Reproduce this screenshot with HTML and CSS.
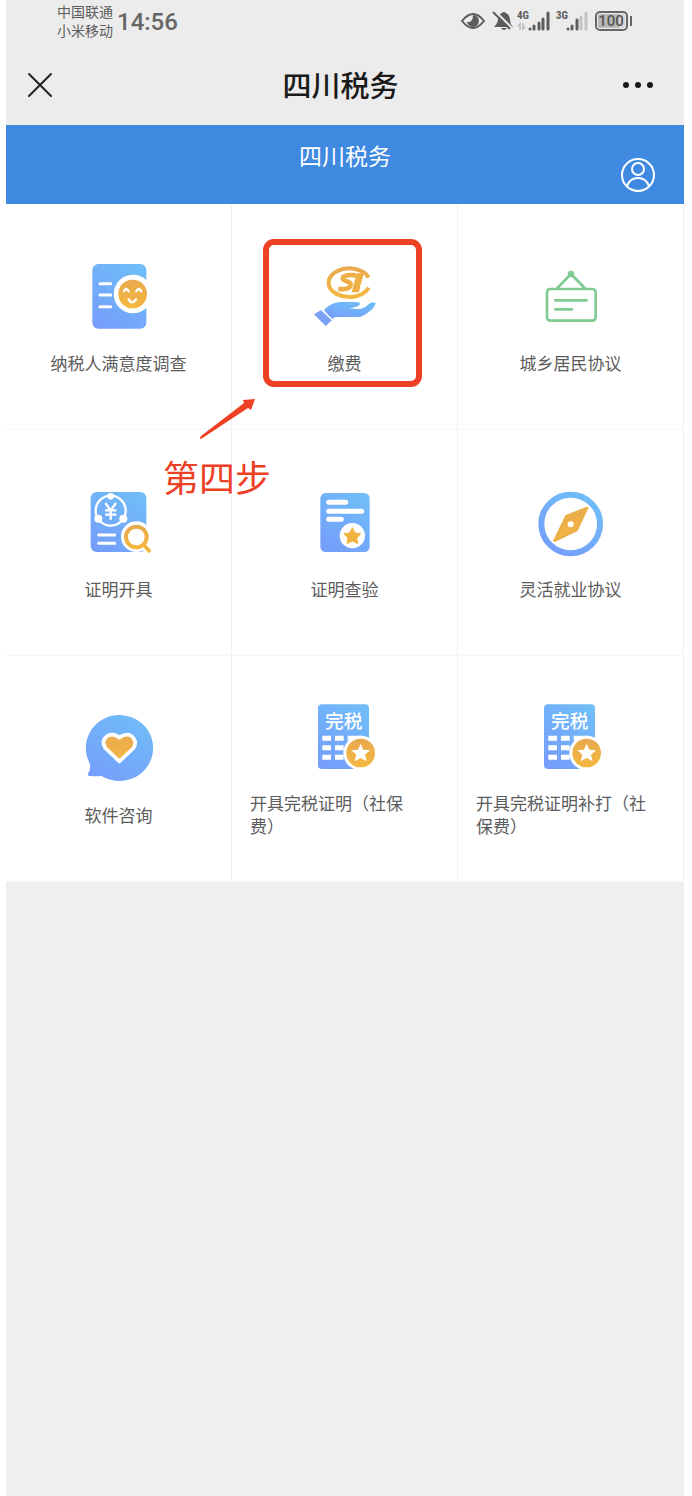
FILE: index.html
```
<!DOCTYPE html>
<html lang="zh-CN">

<head>
    <meta charset="UTF-8">
    <meta name="viewport" content="width=device-width, initial-scale=1">
    <title>四川税务</title>
    <link rel="stylesheet" href="styles.css">
</head>

<body>
    <!-- shared gradients -->
    <svg class="defs" width="0" height="0" aria-hidden="true">
        <defs>
            <linearGradient id="blue" x1="0.8" y1="0" x2="0.2" y2="1">
                <stop offset="0" stop-color="#70bdf8" />
                <stop offset="1" stop-color="#759efa" />
            </linearGradient>
            <linearGradient id="gold" x1="0.5" y1="0" x2="0.5" y2="1">
                <stop offset="0" stop-color="#e9a94e" />
                <stop offset="1" stop-color="#f4b840" />
            </linearGradient>
        </defs>
    </svg>

    <div class="phone">
        <div class="status">
            <div class="carrier">中国联通<br>小米移动</div>
            <time class="clock">14:56</time>
            <svg class="status-icons" viewBox="0 0 176 26" aria-hidden="true">
                <path d="M2 13Q13 -1 24 13Q13 27 2 13Z" fill="none" stroke="#5c5c5c" stroke-width="2" />
                <path d="M13 7a6 6 0 1 1-6 7q6 1 6-7Z" fill="#5c5c5c" />
                <path d="M34 19q4-4 4-8 1-5 4-6 2-2 4 0 4 2 4 7 0 4 3 7ZM41 20h6q-3 4-6 0Z" fill="#5c5c5c" />
                <path d="M35 3l17 17" stroke="#ececec" stroke-width="2" />
                <path d="M33 4l17 17" stroke="#5c5c5c" stroke-width="2" />
                <text class="net" x="57" y="11">4G</text>
                <path d="M60 22v-6l-2 2M63 15v6l2-2" fill="none" stroke="#b8b8b8" stroke-width="1.5" />
                <g stroke="#5c5c5c" stroke-width="3" stroke-linecap="round">
                    <path d="M70 21v0M74 21v-3M79 21v-6M83 21v-10M88 21V5" />
                </g>
                <text class="net" x="96" y="11">3G</text>
                <g stroke="#5c5c5c" stroke-width="3" stroke-linecap="round">
                    <path d="M108 21v0M112 21v-3M117 21v-9" />
                    <path d="M121 21v-12M126 21V5" stroke="#c4c4c4" />
                </g>
                <rect x="136" y="4" width="31" height="18" rx="4" fill="none" stroke="#666" stroke-width="2" />
                <rect x="138" y="6" width="27" height="14" rx="2" fill="#d4d4d4" />
                <path d="M140 6h19v14h-19q-2 0-2-2V8q0-2 2-2Z" fill="#b8b8b8" />
                <text class="battery" x="151" y="18">100</text>
                <path d="M171 8v10" stroke="#666" stroke-width="2" />
            </svg>
        </div>

        <header class="nav">
            <button class="icon-btn" type="button" aria-label="关闭">
                <svg width="26" height="26" viewBox="0 0 26 26">
                    <path d="M2 2l22 22M24 2L2 24" stroke="#222" stroke-width="2" stroke-linecap="round" />
                </svg>
            </button>
            <div class="nav-title">四川税务</div>
            <button class="icon-btn more" type="button" aria-label="更多">
                <svg width="32" height="8" viewBox="0 0 32 8" fill="#181818">
                    <circle cx="4" cy="4" r="3" />
                    <circle cx="16" cy="4" r="3" />
                    <circle cx="28" cy="4" r="3" />
                </svg>
            </button>
        </header>

        <div class="banner">
            <h1>四川税务</h1>
            <a class="user" href="#" aria-label="个人中心">
                <svg width="36" height="36" viewBox="0 0 36 36" fill="none" stroke="#fff" stroke-width="2">
                    <circle cx="18" cy="18" r="16" />
                    <circle cx="18" cy="12" r="6" />
                    <path d="M7 29q3-8 11-8t11 8" />
                </svg>
            </a>
        </div>

        <main class="grid">
            <a class="cell" href="#">
                <svg class="icon" viewBox="-3 30 300 240">
                    <rect x="67" y="42" width="162" height="194" rx="18" fill="url(#blue)" />
                    <path d="M90 101h32M90 135h32M90 170h32" stroke="#fff" stroke-width="9" stroke-linecap="round" />
                    <path d="M229 90A58 58 0 1 0 229 174L234 168V96Z" fill="#fff" />
                    <circle cx="188" cy="132" r="43" fill="url(#gold)" />
                    <path d="M162 124q6-14 14 0M199 124q7-14 15 0M176 148q10 18 22 0" fill="none" stroke="#fff"
                        stroke-width="7" stroke-linecap="round" />
                </svg>
                <span class="label">纳税人满意度调查</span>
            </a>

            <a class="cell" href="#">
                <svg class="icon" viewBox="135 90 300 240">
                    <path d="M356 143A62 43 0 1 0 356 173" fill="none" stroke="url(#gold)" stroke-width="12" />
                    <path d="M318 136q-37-4-40 9c0 10 27 8 24 20q-3 15-37 12" fill="none" stroke="#eeb044"
                        stroke-width="14" />
                    <path d="M320 130h22l-15 57h-22Z" fill="#eeb044" />
                    <path d="M343 135q-11 27-14 54" fill="none" stroke="#fff" stroke-width="3" />
                    <path d="M222 240q24-26 55-24h40q17 0 12 8-5 7-33 11l24 2q24 1 35-14 15-11 22-3-4 15-22 27-16 14-32 14h-67l-13 8Z"
                        fill="url(#blue)" />
                    <path d="M192 253l21-13 33 31-19 17Z" fill="#7ba2f6" />
                    <path d="M214 238l34 33" stroke="#fff" stroke-width="4" />
                </svg>
                <span class="label">缴费</span>
                <span class="highlight"></span>
                <span class="callout">
                    <svg class="arrow" width="56" height="42" viewBox="0 0 56 42">
                        <path d="M55 1l-4 11-3-2L1 41q-2 0 0-3L44 5l-1-3Z" fill="#ed4025" />
                    </svg>
                    第四步
                </span>
            </a>

            <a class="cell" href="#">
                <svg class="icon" viewBox="3 30 300 240">
                    <g fill="none" stroke="#7fcb91" stroke-width="8" stroke-linecap="round">
                        <rect x="81" y="117" width="146" height="95" rx="10" />
                        <path d="M112 114l41-42 41 42M106 151h94M106 178h50" />
                    </g>
                    <circle cx="153" cy="72" r="10" fill="#7fcb91" />
                </svg>
                <span class="label">城乡居民协议</span>
            </a>

            <a class="cell" href="#">
                <svg class="icon" viewBox="-3 18 300 240">
                    <rect x="62" y="36" width="167" height="180" rx="18" fill="url(#blue)" />
                    <circle cx="122" cy="92" r="45" fill="none" stroke="#fff" stroke-width="7" />
                    <g fill="#fff">
                        <circle cx="122" cy="49" r="10" />
                        <circle cx="85" cy="116" r="12" />
                        <circle cx="160" cy="116" r="12" />
                        <circle cx="199" cy="170" r="46" />
                    </g>
                    <path d="M106 69l16 22 16-22M122 91v28M105 91h34M105 104h34" fill="none" stroke="#fff"
                        stroke-width="7" />
                    <path d="M86 165h48M86 190h48" stroke="#fff" stroke-width="9" stroke-linecap="round" />
                    <path d="M220 195l22 22" stroke="#fff" stroke-width="24" />
                    <circle cx="199" cy="171" r="31" fill="none" stroke="url(#gold)" stroke-width="12" />
                    <path d="M221 194l19 22" stroke="#f4b33d" stroke-width="11" />
                </svg>
                <span class="label">证明开具</span>
            </a>

            <a class="cell" href="#">
                <svg class="icon" viewBox="0 18 300 240">
                    <rect x="76" y="39" width="148" height="177" rx="16" fill="url(#blue)" />
                    <path d="M101 67h51M101 94h99M101 118h38" stroke="#fff" stroke-width="15" stroke-linecap="round" />
                    <circle cx="172" cy="167" r="38" fill="#fff" />
                    <path d="M172 143l8 16 17 2-12 13 3 17-16-8-16 8 3-17-12-13 17-2Z" fill="#f0b33f" stroke="#f0b33f"
                        stroke-width="3" stroke-linejoin="round" />
                </svg>
                <span class="label">证明查验</span>
            </a>

            <a class="cell" href="#">
                <svg class="icon" viewBox="3 18 300 240">
                    <circle cx="152" cy="132" r="88" fill="none" stroke="url(#blue)" stroke-width="18" />
                    <path d="M201 84l-62 25-35 73 66-32Z" fill="url(#gold)" stroke="#ebaf47" stroke-width="8"
                        stroke-linejoin="round" />
                    <circle cx="152" cy="133" r="9" fill="#fff" />
                </svg>
                <span class="label">灵活就业协议</span>
            </a>

            <a class="cell" href="#">
                <svg class="icon" viewBox="-3 36 300 240">
                    <path d="M59 190A101 99 0 1 1 95 228Q76 229 58 228q-8-1-3-8 8-14 4-30Z" fill="url(#blue)" />
                    <path d="M148 184l-42-40q-14-23 7-37 20-9 35 6 17-15 35-6 20 14 8 37Z" fill="url(#gold)"
                        stroke="#fff" stroke-width="11" stroke-linejoin="round" />
                </svg>
                <span class="label">软件咨询</span>
            </a>

            <a class="cell" href="#">
                <svg class="icon" viewBox="0 15 300 240">
                    <rect x="69" y="28" width="153" height="194" rx="12" fill="url(#blue)" />
                    <text class="stamp" x="146" y="98">完税</text>
                    <path d="M82 130h26M120 130h26M158 130h42M82 158h26M120 158h26M82 187h26M120 187h26" stroke="#fff"
                        stroke-width="15" />
                    <circle cx="197" cy="174" r="52" fill="#fff" />
                    <circle cx="197" cy="174" r="43" fill="url(#gold)" />
                    <path d="M197 146l8 18 20 2-15 13 5 20-18-10-18 10 5-20-15-13 20-2Z" fill="#fff" />
                </svg>
                <span class="label label-long">开具完税证明（社保费）</span>
            </a>

            <a class="cell" href="#">
                <svg class="icon" viewBox="0 15 300 240">
                    <rect x="69" y="28" width="153" height="194" rx="12" fill="url(#blue)" />
                    <text class="stamp" x="146" y="98">完税</text>
                    <path d="M82 130h26M120 130h26M158 130h42M82 158h26M120 158h26M82 187h26M120 187h26" stroke="#fff"
                        stroke-width="15" />
                    <circle cx="197" cy="174" r="52" fill="#fff" />
                    <circle cx="197" cy="174" r="43" fill="url(#gold)" />
                    <path d="M197 146l8 18 20 2-15 13 5 20-18-10-18 10 5-20-15-13 20-2Z" fill="#fff" />
                </svg>
                <span class="label label-long">开具完税证明补打（社保费）</span>
            </a>
        </main>
    </div>
</body>

</html>
```
FILE: styles.css
```
* {
    box-sizing: border-box;
}

body {
    margin: 0;
    padding: 0 8px 0 6px;
    background: #fff;
    font-family: "Noto Sans CJK SC", sans-serif;
    color: #5c5c5c;
}

.defs {
    position: absolute;
}

.phone {
    min-height: 100vh;
    background: #efefef;
}

.status {
    display: flex;
    align-items: flex-start;
    height: 44px;
    padding: 2px 48px 0 51px;
    background: #ececec;
}

.carrier {
    font-size: 14px;
    line-height: 19px;
}

.clock {
    margin-left: 4px;
    font-family: Roboto, sans-serif;
    font-size: 24px;
    font-weight: 500;
    line-height: 40px;
    color: #666;
}

.status-icons {
    width: 176px;
    height: 26px;
    margin: 6px 0 0 auto;
}

.net {
    font: bold 11px "Liberation Sans Narrow", "Roboto Condensed", Roboto, sans-serif;
    fill: #5c5c5c;
}

.battery {
    font: 500 15px Roboto, sans-serif;
    fill: #555;
    text-anchor: middle;
}

.nav {
    display: grid;
    grid-template-columns: 1fr auto 1fr;
    align-items: center;
    height: 81px;
    padding: 0 30px 0 21px;
    background: #ececec;
}

.nav-title {
    font-size: 29px;
    font-weight: 500;
    line-height: 42px;
    padding-bottom: 2px;
    color: #1a1a1a;
}

.icon-btn {
    display: flex;
    justify-self: start;
    padding: 0;
    border: none;
    background: none;
    cursor: pointer;
}

.more {
    justify-self: end;
}

.banner {
    display: grid;
    grid-template-columns: 1fr auto 1fr;
    height: 79px;
    padding: 0 28px;
    background: #4089e0;
}

.banner h1 {
    grid-column: 2;
    margin: 14px 0 0;
    font-size: 23px;
    font-weight: 400;
    line-height: 32px;
    color: #fff;
}

.user {
    display: flex;
    justify-self: end;
    margin-top: 32px;
}

.grid {
    display: grid;
    grid-template-columns: repeat(3, 1fr);
    background: #fff;
}

.cell {
    position: relative;
    display: flex;
    flex-direction: column;
    align-items: center;
    justify-content: center;
    min-height: 226px;
    border-right: 1px solid #f0f0f0;
    border-bottom: 1px solid #f7f7f7;
    color: #5c5c5c;
    text-decoration: none;
}

.icon {
    width: 100px;
    height: 80px;
}

.label {
    margin-top: 11px;
    font-size: 17px;
    line-height: 23px;
}

.label-long {
    align-self: stretch;
    padding: 0 30px 0 18px;
}

.stamp {
    font-size: 56px;
    font-weight: 500;
    fill: #fff;
    text-anchor: middle;
}

/* step marker over the payment entry */
.highlight {
    position: absolute;
    inset: 35px 35px 42px 31px;
    border: 6px solid #ed4025;
    border-radius: 11px;
}

.callout {
    position: absolute;
    top: 194px;
    left: -69px;
    z-index: 1;
    font-size: 36px;
    line-height: 44px;
    white-space: nowrap;
    color: #ed4025;
}

.arrow {
    display: block;
    margin: 0 0 14px 37px;
}
```
